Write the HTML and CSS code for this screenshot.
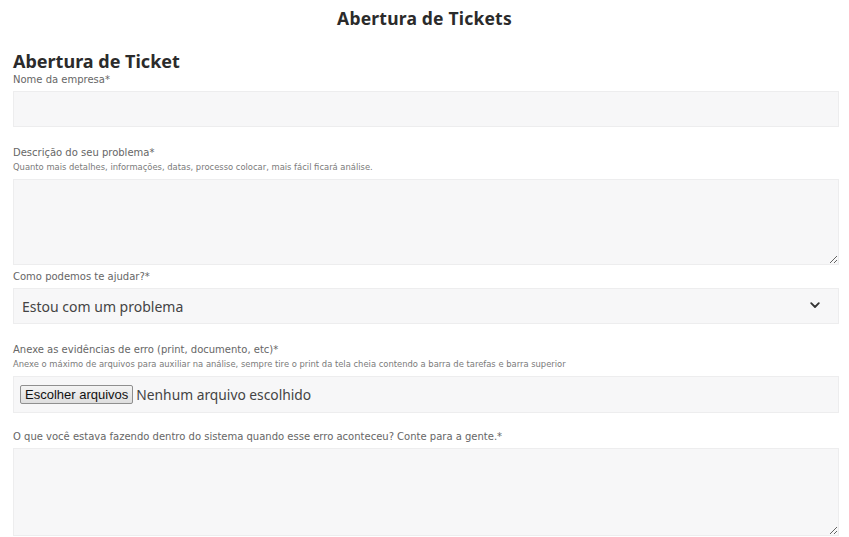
FILE: index.html
```html
<!DOCTYPE html>
<html lang="pt-BR">
<head>
<meta charset="utf-8">
<title>Abertura de Tickets</title>
<link rel="stylesheet" href="styles.css">
</head>
<body>
<h1 class="page-title">Abertura de Tickets</h1>
<form class="ticket-form">
  <h2 class="form-title">Abertura de Ticket</h2>

  <div class="field field-first">
    <label class="label">Nome da empresa*</label>
    <input class="control input" type="text">
  </div>

  <div class="field">
    <label class="label">Descrição do seu problema*</label>
    <p class="hint">Quanto mais detalhes, informações, datas, processo colocar, mais fácil ficará análise.</p>
    <textarea class="control area"></textarea>
  </div>

  <div class="field field-tight">
    <label class="label">Como podemos te ajudar?*</label>
    <div class="select-wrap">
      <select class="control select">
        <option>Estou com um problema</option>
      </select>
      <svg class="chevron" width="10" height="7" viewBox="0 0 10 7"><path d="M1.2 1.2 L5 5 L8.8 1.2" fill="none" stroke="#333" stroke-width="1.8" stroke-linecap="round" stroke-linejoin="round"/></svg>
    </div>
  </div>

  <div class="field">
    <label class="label">Anexe as evidências de erro (print, documento, etc)*</label>
    <p class="hint">Anexe o máximo de arquivos para auxiliar na análise, sempre tire o print da tela cheia contendo a barra de tarefas e barra superior</p>
    <div class="control file-box">
      <button type="button" class="file-btn">Escolher arquivos</button>
      <span class="file-name">Nenhum arquivo escolhido</span>
    </div>
  </div>

  <div class="field field-last">
    <label class="label">O que você estava fazendo dentro do sistema quando esse erro aconteceu? Conte para a gente.*</label>
    <textarea class="control area area-tall"></textarea>
  </div>
</form>
</body>
</html>
```

FILE: styles.css
```css
* { box-sizing: border-box; }
html, body { margin: 0; padding: 0; background: #fff; }
body {
  font-family: "Noto Sans", "Open Sans", Arial, sans-serif;
  color: #555;
  overflow: hidden;
}
.page-title {
  margin: 0;
  padding-top: 9px;
  font-family: "Noto Sans", Arial, sans-serif;
  font-size: 17.5px;
  line-height: 18px;
  font-weight: 700;
  color: #2b2b2b;
  text-align: center;
  letter-spacing: 0.2px;
}
.ticket-form {
  display: flex;
  flex-direction: column;
  padding: 0 10px 0 13px;
  margin-top: 23px;
}
.form-title {
  margin: 0;
  font-size: 18px;
  line-height: 22px;
  font-weight: 700;
  color: #2b2b2b;
}
.field {
  display: flex;
  flex-direction: column;
  margin-top: 20px;
}
.field-first { margin-top: 2px; }
.field-tight { margin-top: 6px; }
.field-last { margin-top: 18px; }
.label {
  font-family: "DejaVu Sans", Verdana, sans-serif;
  font-size: 10px;
  line-height: 12px;
  color: #666;
  margin-bottom: 5px;
}
.hint {
  margin: -2px 0 7px;
  font-family: "DejaVu Sans", Verdana, sans-serif;
  font-size: 8.4px;
  line-height: 10px;
  color: #7a7a7a;
}
.control {
  display: block;
  width: 100%;
  margin: 0;
  background: #f7f7f8;
  border: 1px solid #ededee;
  border-radius: 0;
  outline: none;
  font-family: inherit;
}
.input { height: 36px; }
.area { height: 86px; resize: vertical; }
.area-tall { height: 88px; }
.select-wrap { position: relative; }
.select {
  height: 36px;
  padding: 0 8px;
  appearance: none;
  -webkit-appearance: none;
  font-size: 14px;
  color: #444;
}
.chevron {
  position: absolute;
  right: 19px;
  top: 14px;
}
.file-box {
  height: 37px;
  display: flex;
  align-items: center;
  padding: 0 6px;
  gap: 3px;
}
.file-btn {
  height: 19px;
  padding: 0 4px;
  font-family: "Liberation Sans", Arial, sans-serif;
  font-size: 13px;
  color: #111;
  background: linear-gradient(#f4f4f4, #dedede);
  border: 1px solid #8f8f8f;
  border-radius: 2px;
}
.file-name {
  font-size: 13.8px;
  color: #444;
}
```
